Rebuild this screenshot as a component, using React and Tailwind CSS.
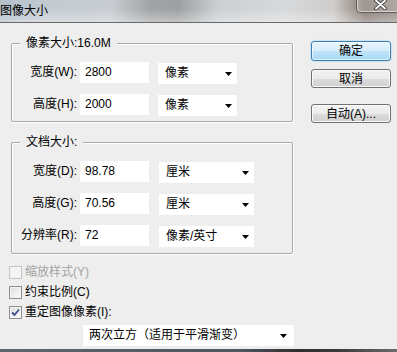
import React from "react";

const Tri = () => (
  <svg width="7" height="4" viewBox="0 0 7 4" className="shrink-0">
    <path d="M0 0H7L3.5 4Z" fill="#000" />
  </svg>
);

function Field({ label, value, unit, selW, selMl }) {
  return (
    <div className="flex items-start">
      <div className="w-[65px] text-right leading-[21px] whitespace-nowrap">{label}</div>
      <div className="ml-[3px] h-[21px] w-[69px] bg-white pl-[5px] leading-[21px]">{value}</div>
      <div className={`${selMl} ${selW} mt-[1px] flex h-[21px] items-center justify-between bg-white pl-[7px] pr-[5px]`}>
        <span className="leading-[21px]">{unit}</span>
        <Tri />
      </div>
    </div>
  );
}

function Group({ legend, children, pb }) {
  return (
    <div className={`relative ml-[11px] mt-[20px] w-[282px] rounded-[2px] border border-[#a9a9a9] shadow-[inset_1px_1px_0_#fff,1px_1px_0_#fff] pt-[18px] ${pb} flex flex-col gap-[10px]`}>
      <span className="absolute left-[8px] top-[-8px] bg-[#eeeeee] px-[6px] leading-[14px] whitespace-nowrap">{legend}</span>
      {children}
    </div>
  );
}

function Check({ state, label }) {
  const disabled = state === "disabled";
  return (
    <div className="ml-[9px] flex h-[20px] items-center">
      <div
        className={
          disabled
            ? "flex h-[13px] w-[13px] items-center justify-center border border-[#c6c6c6] bg-[#f4f4f4]"
            : "flex h-[13px] w-[13px] items-center justify-center border border-[#8e8f8f] bg-[linear-gradient(135deg,#dcdcdc,#ffffff)] shadow-[inset_0_0_0_1px_#f4f4f4]"
        }
      >
        {state === "checked" && (
          <svg width="9" height="9" viewBox="0 0 9 9">
            <path d="M1 4.5L3.5 7L8 1.5" fill="none" stroke="#3b4f8c" strokeWidth="1.8" />
          </svg>
        )}
      </div>
      <span className={`ml-[3px] whitespace-nowrap ${disabled ? "text-[#a3a3a3]" : "text-black"}`}>{label}</span>
    </div>
  );
}

export default function App() {
  return (
    <div className="flex h-[352px] w-[397px] flex-col overflow-hidden bg-[#eeeeee] font-['Liberation_Sans','Noto_Sans_CJK_SC',sans-serif] text-[12px] text-black">
      {/* title bar */}
      <div className="relative h-[23px] shrink-0 border-b border-[#6a6a6a] bg-[linear-gradient(to_right,#b3bfc9_0%,#c3cbd2_12%,#c8cdd2_28%,#a1a4a6_38%,#9ea1a3_45%,#ccd0d3_55%,#d7d9db_72%,#cfcdcb_84%,#877c75_92%,#9a918b_100%)]">
        <div className="absolute inset-0 bg-[linear-gradient(to_bottom,rgba(255,255,255,0)_40%,rgba(255,255,255,0.35)_100%)]" />
        <span className="relative block pl-0 leading-[22px] text-[12px]">图像大小</span>
        <div className="absolute right-[-3px] top-[-2px] flex h-[15px] w-[44px] items-center justify-center rounded-bl-[4px] border border-[#5e5e5e] bg-[rgba(255,255,255,0.2)] shadow-[inset_0_0_0_1px_rgba(255,255,255,0.5)]">
          <svg width="13" height="11" viewBox="0 0 13 11" className="ml-[4px] mt-[-3px]">
            <path d="M2 1.5L11 9.5M11 1.5L2 9.5" stroke="#3a3a3a" strokeWidth="3.6" strokeLinecap="round" />
            <path d="M2 1.5L11 9.5M11 1.5L2 9.5" stroke="#ffffff" strokeWidth="1.8" strokeLinecap="round" />
          </svg>
        </div>
      </div>

      <div className="flex flex-1">
        <div className="flex w-[293px] flex-col">
          <Group legend="像素大小:16.0M" pb="pb-[5px]">
            <Field label="宽度(W):" value="2800" unit="像素" selW="w-[79px]" selMl="ml-[9px]" />
            <Field label="高度(H):" value="2000" unit="像素" selW="w-[79px]" selMl="ml-[9px]" />
          </Group>
          <Group legend="文档大小:" pb="pb-[6px]">
            <Field label="宽度(D):" value="98.78" unit="厘米" selW="w-[95px]" selMl="ml-[10px]" />
            <Field label="高度(G):" value="70.56" unit="厘米" selW="w-[95px]" selMl="ml-[10px]" />
            <Field label="分辨率(R):" value="72" unit="像素/英寸" selW="w-[95px]" selMl="ml-[10px]" />
          </Group>
          <div className="mt-[8px] flex flex-col">
            <Check state="disabled" label="缩放样式(Y)" />
            <Check state="unchecked" label="约束比例(C)" />
            <Check state="checked" label="重定图像像素(I):" />
          </div>
          <div className="ml-[83px] mt-[3px] flex h-[21px] w-[211px] items-center justify-between bg-white pl-[6px] pr-[7px]">
            <span className="whitespace-nowrap leading-[21px]">两次立方（适用于平滑渐变）</span>
            <Tri />
          </div>
        </div>

        <div className="ml-[18px] mt-[18px] flex w-[80px] flex-col">
          <button className="flex h-[20px] w-[80px] items-center justify-center rounded-[3px] border border-[#3c7fb1] bg-[linear-gradient(#e6f5fd,#d6eefb_50%,#bfe4f9_50%,#a9d9f4)] shadow-[0_0_2px_#7fcbf2,inset_0_0_0_1px_rgba(255,255,255,0.6)] leading-none">
            确定
          </button>
          <button className="mt-[8px] flex h-[19px] w-[80px] items-center justify-center rounded-[3px] border border-[#707070] bg-[linear-gradient(#f2f2f2,#ebebeb_50%,#dddddd_50%,#cfcfcf)] shadow-[inset_0_0_0_1px_#fcfcfc] leading-none">
            取消
          </button>
          <button className="mt-[16px] flex h-[19px] w-[80px] items-center justify-center rounded-[3px] border border-[#707070] bg-[linear-gradient(#f2f2f2,#ebebeb_50%,#dddddd_50%,#cfcfcf)] shadow-[inset_0_0_0_1px_#fcfcfc] leading-none">
            自动(A)...
          </button>
        </div>
      </div>

      <div className="h-[3px] shrink-0 bg-[linear-gradient(to_right,#5c6670_0%,#4f5760_60%,#2e2e2e_75%,#3a3a3a_85%,#6a6a6a_100%)]" />
    </div>
  );
}
